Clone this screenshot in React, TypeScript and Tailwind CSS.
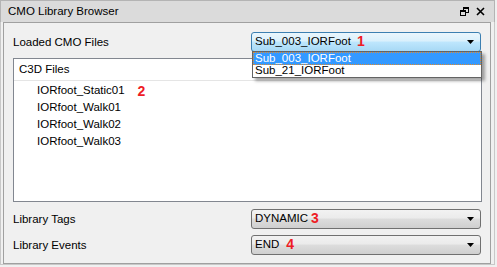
import React from "react";

const font = { fontFamily: '"Liberation Sans", Arial, sans-serif' };

function Arrow() {
  return (
    <svg width="7" height="4" viewBox="0 0 7 4" className="shrink-0">
      <polygon points="0,0 7,0 3.5,4" fill="#000" />
    </svg>
  );
}

function Combo({
  text,
  mark,
  markGap,
  hot,
}: {
  text: string;
  mark: string;
  markGap: string;
  hot?: boolean;
}) {
  return (
    <div
      className={
        "w-[230px] h-[20px] rounded-[3px] border flex items-center pl-[3px] pr-[6px] " +
        (hot
          ? "border-[#3c7fb1] bg-[linear-gradient(to_bottom,#eaf6fd_0%,#d9f0fc_45%,#bee6fd_50%,#a7d9f5_100%)]"
          : "border-[#707070] bg-[linear-gradient(to_bottom,#f2f2f2_0%,#ebebeb_45%,#dddddd_50%,#cfcfcf_100%)]")
      }
    >
      <span className="text-[11.5px] leading-none text-black">{text}</span>
      <span className={"text-[14px] font-bold leading-none text-[#ee1c25] -mt-[2px] " + markGap}>{mark}</span>
      <span className="flex-1" />
      <Arrow />
    </div>
  );
}

export default function App() {
  return (
    <div className="w-[497px] h-[267px] bg-[#f0f0f0] overflow-hidden relative" style={font}>
      {/* title bar */}
      <div className="h-[22px] w-[495px] bg-[#dbdbdb] border border-[#b4b4b4] border-b-0 flex items-center pl-[7px] pr-[9px]">
        <span className="text-[11.5px] text-black leading-none">CMO Library Browser</span>
        <span className="flex-1" />
        <svg width="9" height="9" viewBox="0 0 9 9" className="mr-[7px]">
          <rect x="3.5" y="0.5" width="5" height="5" fill="none" stroke="#000" />
          <rect x="3" y="0" width="6" height="2" fill="#000" />
          <rect x="0.5" y="3.5" width="5" height="5" fill="#dbdbdb" stroke="#000" />
          <rect x="0" y="3" width="6" height="2" fill="#000" />
        </svg>
        <svg width="9" height="9" viewBox="0 0 9 9">
          <path d="M1 1 L8 8 M8 1 L1 8" stroke="#000" strokeWidth="1.6" />
        </svg>
      </div>
      <div className="w-[495px] h-[243px] border-l border-r border-b border-[#c8c8c8] pl-[2px] pr-[2px]">
        {/* main panel */}
        <div className="w-[488px] h-[242px] border border-[#a0a0a0] relative px-[9px] pt-[9px]">
          <div className="flex items-center h-[20px]">
            <span className="text-[11.5px] text-black leading-none mt-[1px]">Loaded CMO Files</span>
            <span className="flex-1" />
            <Combo text="Sub_003_IORFoot" mark="1" markGap="ml-[6px]" hot />
          </div>
          {/* tree */}
          <div className="mt-[6px] w-[469px] h-[144px] border border-[#828790] bg-white">
            <div className="h-[22px] border-b border-[#e5e5e5] flex items-center pl-[5px]">
              <span className="text-[11.5px] text-black leading-none">C3D Files</span>
            </div>
            <div className="pl-[23px] pt-[1px] flex flex-col">
              <div className="h-[17px] flex items-center">
                <span className="text-[11.5px] text-black leading-none">IORfoot_Static01</span>
                <span className="text-[14px] font-bold leading-none text-[#ee1c25] ml-[13px]">2</span>
              </div>
              <div className="h-[17px] flex items-center">
                <span className="text-[11.5px] text-black leading-none">IORfoot_Walk01</span>
              </div>
              <div className="h-[17px] flex items-center">
                <span className="text-[11.5px] text-black leading-none">IORfoot_Walk02</span>
              </div>
              <div className="h-[17px] flex items-center">
                <span className="text-[11.5px] text-black leading-none">IORfoot_Walk03</span>
              </div>
            </div>
          </div>
          <div className="flex items-center h-[20px] mt-[7px]">
            <span className="text-[11.5px] text-black leading-none mt-[2px]">Library Tags</span>
            <span className="flex-1" />
            <Combo text="DYNAMIC" mark="3" markGap="ml-[3px]" />
          </div>
          <div className="flex items-center h-[20px] mt-[6px]">
            <span className="text-[11.5px] text-black leading-none mt-[2px]">Library Events</span>
            <span className="flex-1" />
            <Combo text="END" mark="4" markGap="ml-[7px]" />
          </div>

          {/* dropdown list overlay */}
          <div className="absolute left-[248px] top-[28px] w-[230px] h-[27px] bg-white border border-[#646464] shadow-[3px_3px_3px_rgba(0,0,0,0.35)] flex flex-col">
            <div className="h-[13px] bg-[#3399ff] outline-1 outline-dotted outline-[#e08a2c] -outline-offset-1 flex items-center pl-[2px]">
              <span className="text-[11.5px] text-white leading-none">Sub_003_IORFoot</span>
            </div>
            <div className="h-[13px] flex items-center pl-[2px]">
              <span className="text-[11.5px] text-black leading-none">Sub_21_IORFoot</span>
            </div>
          </div>
        </div>
      </div>
    </div>
  );
}
